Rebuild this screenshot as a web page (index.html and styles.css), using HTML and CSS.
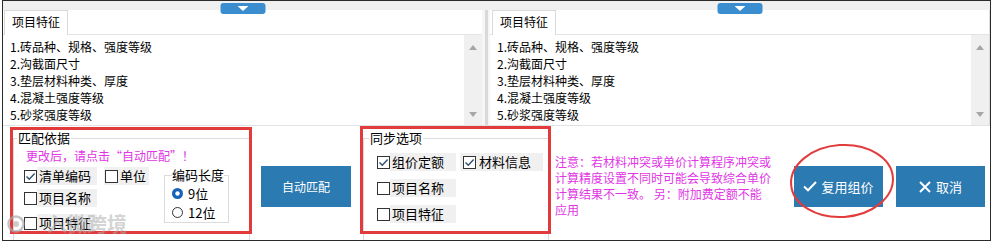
FILE: index.html
```html
<!DOCTYPE html>
<html lang="zh-CN">
<head>
<meta charset="utf-8">
<title>复用组价</title>
<link rel="stylesheet" href="styles.css">
</head>
<body>
<div class="win">
  <div class="strip"></div>
  <div class="panes">
    <section class="pane pane-left">
      <span class="handle"><svg width="11" height="5" viewBox="0 0 11 5"><path d="M0 0H11L5.5 5Z" fill="#fff"/></svg></span>
      <div class="tabs"><div class="tab">项目特征</div></div>
      <div class="pane-body">
        <div class="lines">
          <div>1.砖品种、规格、强度等级</div>
          <div>2.沟截面尺寸</div>
          <div>3.垫层材料种类、厚度</div>
          <div>4.混凝土强度等级</div>
          <div>5.砂浆强度等级</div>
        </div>
        <div class="vscroll"><span class="arr up"></span><span class="arr down"></span></div>
      </div>
    </section>
    <div class="divider"></div>
    <section class="pane pane-right">
      <span class="handle"><svg width="11" height="5" viewBox="0 0 11 5"><path d="M0 0H11L5.5 5Z" fill="#fff"/></svg></span>
      <div class="tabs"><div class="tab">项目特征</div></div>
      <div class="pane-body">
        <div class="lines">
          <div>1.砖品种、规格、强度等级</div>
          <div>2.沟截面尺寸</div>
          <div>3.垫层材料种类、厚度</div>
          <div>4.混凝土强度等级</div>
          <div>5.砂浆强度等级</div>
        </div>
        <div class="vscroll"><span class="arr up"></span><span class="arr down"></span></div>
      </div>
    </section>
  </div>
  <div class="bottom">
    <fieldset class="grp grp-match">
      <legend>匹配依据</legend>
      <p class="hint">更改后，请点击“自动匹配”！</p>
      <div class="match-body">
        <div class="checks">
          <label class="chk"><span class="box on"><svg width="11" height="11" viewBox="0 0 11 11"><path d="M1.5 5.5L4.3 8.3L9.6 2.6" fill="none" stroke="#2f4f6f" stroke-width="1.4"/></svg></span><span class="lbl">清单编码</span></label>
          <label class="chk full"><span class="box"></span><span class="lbl">单位</span></label>
          <label class="chk"><span class="box"></span><span class="lbl">项目名称</span></label>
          <span></span>
          <label class="chk row3"><span class="box"></span><span class="lbl">项目特征</span></label>
        </div>
        <fieldset class="grp grp-len">
          <legend>编码长度</legend>
          <label class="radio first"><svg width="11" height="11" viewBox="0 0 11 11"><circle cx="5.5" cy="5.5" r="5.5" fill="#1763b8"/><circle cx="5.5" cy="5.5" r="2.2" fill="#fff"/></svg><span>9位</span></label>
          <label class="radio"><svg width="11" height="11" viewBox="0 0 11 11"><circle cx="5.5" cy="5.5" r="5" fill="#fff" stroke="#333" stroke-width="1"/></svg><span>12位</span></label>
        </fieldset>
      </div>
    </fieldset>
    <button class="btn btn-auto" type="button">自动匹配</button>
    <fieldset class="grp grp-sync">
      <legend>同步选项</legend>
      <div class="sync-body">
        <label class="chk"><span class="box on"><svg width="11" height="11" viewBox="0 0 11 11"><path d="M1.5 5.5L4.3 8.3L9.6 2.6" fill="none" stroke="#2f4f6f" stroke-width="1.4"/></svg></span><span class="lbl">组价定额</span></label>
        <label class="chk full"><span class="box on"><svg width="11" height="11" viewBox="0 0 11 11"><path d="M1.5 5.5L4.3 8.3L9.6 2.6" fill="none" stroke="#2f4f6f" stroke-width="1.4"/></svg></span><span class="lbl">材料信息</span></label>
        <label class="chk"><span class="box"></span><span class="lbl">项目名称</span></label>
        <span></span>
        <label class="chk"><span class="box"></span><span class="lbl">项目特征</span></label>
      </div>
    </fieldset>
    <p class="note">注意：若材料冲突或单价计算程序冲突或<br>计算精度设置不同时可能会导致综合单价<br>计算结果不一致。 另：附加费定额不能<br>应用</p>
    <button class="btn btn-reuse" type="button"><svg width="14" height="11" viewBox="0 0 14 11"><path d="M1 5.5L5 9.3L13 1" fill="none" stroke="#fff" stroke-width="2"/></svg><span>复用组价</span></button>
    <button class="btn btn-cancel" type="button"><svg width="12" height="12" viewBox="0 0 12 12"><path d="M1 1L11 11M11 1L1 11" fill="none" stroke="#fff" stroke-width="2"/></svg><span>取消</span></button>

    <span class="mark mark-match"></span>
    <span class="mark mark-sync"></span>
    <svg class="mark-ellipse" width="108" height="78" viewBox="0 0 108 78"><ellipse cx="54" cy="39" rx="51" ry="36" transform="rotate(-4 54 39)" fill="none" stroke="#e23b3b" stroke-width="2"/></svg>
    <div class="watermark"><svg width="18" height="18" viewBox="0 0 18 18"><circle cx="9" cy="9" r="7.5" fill="none" stroke="rgba(170,170,170,0.7)" stroke-width="2.5"/><circle cx="9" cy="9" r="3" fill="rgba(170,170,170,0.6)"/></svg><span>入微跨境</span></div>
  </div>
</div>
</body>
</html>
```
FILE: styles.css
```css
* { box-sizing: border-box; }

body {
  margin: 0;
  background: #fff;
  font-family: "Noto Sans CJK SC", "Noto Sans", sans-serif;
  color: #000;
}

.win {
  position: relative;
  margin-left: 2px;
  width: 989px;
  height: 241px;
  border: 1px solid #2b2b2b;
  display: flex;
  flex-direction: column;
  background: #fff;
  overflow: hidden;
}

.strip {
  flex: none;
  height: 9px;
  background: #f0f0f0;
}

.panes {
  flex: none;
  display: flex;
  height: 115px;
}

.pane {
  position: relative;
  display: flex;
  flex-direction: column;
}

.pane-left { width: 479px; }

.pane-right {
  flex: 1;
  border-right: 1px solid #dcdcdc;
}

.divider {
  width: 8px;
  background: linear-gradient(to right, #f6f6f6 0 3px, #d9d9d9 3px 6px, #f6f6f6 6px);
}

.handle {
  position: absolute;
  top: -7px;
  left: 50%;
  transform: translateX(-50%);
  width: 45px;
  height: 11px;
  border-radius: 3px;
  background: #3a8dcf;
  display: flex;
  align-items: center;
  justify-content: center;
  z-index: 2;
}

.tabs {
  height: 25px;
  border-bottom: 1px solid #e3e3e3;
  display: flex;
  align-items: flex-end;
  padding-left: 1px;
  background: #fff;
}

.pane-right .tabs { padding-left: 2px; }

.tab {
  width: 64px;
  height: 25px;
  margin-bottom: -1px;
  border: 1px solid #dadada;
  border-bottom: none;
  background: #fff;
  font-size: 12px;
  line-height: 22px;
  padding-left: 7px;
}

.pane-body {
  display: flex;
  height: 90px;
}

.lines {
  flex: 1;
  padding: 3px 0 0 7px;
  font-size: 12px;
  line-height: 17px;
}

.vscroll {
  width: 18px;
  background: #f0f0f0;
  display: flex;
  flex-direction: column;
  justify-content: space-between;
  align-items: center;
  padding: 10px 0 8px;
}

.arr {
  width: 0;
  height: 0;
  border-left: 4px solid transparent;
  border-right: 4px solid transparent;
}
.arr.up { border-bottom: 5px solid #a6a6a6; }
.arr.down { border-top: 5px solid #a6a6a6; }

/* bottom area */
.bottom {
  flex: 1;
  position: relative;
  border-top: 1px solid #e3e3e3;
  display: flex;
  align-items: flex-start;
  padding-left: 10px;
  overflow: hidden;
}

.grp {
  flex: none;
  margin: 4px 0 0;
  padding: 0;
  border: 1px solid #dcdcdc;
  min-width: 0;
}

.grp legend {
  font-size: 13px;
  line-height: 16px;
  padding: 0 1px;
  margin-left: 3px;
}

.grp-match {
  width: 237px;
  height: 120px;
}

.hint {
  margin: 2px 0 0 12px;
  font-size: 12px;
  line-height: 16px;
  color: #e135e6;
}

.match-body {
  display: flex;
  margin: 3px 0 0 10px;
}

.checks {
  display: grid;
  grid-template-columns: 80px auto;
  row-gap: 4px;
  width: 140px;
  align-items: start;
  justify-items: start;
}

.chk {
  display: flex;
  align-items: center;
  height: 18px;
  font-size: 13px;
}

.box {
  flex: none;
  width: 13px;
  height: 13px;
  border: 1px solid #333;
  background: #fff;
  display: flex;
  align-items: center;
  justify-content: center;
}

.lbl {
  height: 18px;
  line-height: 18px;
  background: #f0f0f0;
  padding: 0 6px 0 2px;
}

.chk.full {
  background: #f0f0f0;
  padding: 0 3px 0 1px;
}
.chk.full .lbl {
  background: none;
  padding: 0 0 0 2px;
}

.chk.row3 { margin-top: 3px; }

.grp-len {
  margin: 0;
  width: 65px;
  height: 56px;
  padding: 0 0 0 7px;
}
.grp-len legend {
  margin-left: 0;
  padding: 0;
}

.radio {
  display: flex;
  align-items: center;
  gap: 5px;
  height: 18px;
  font-size: 13px;
  margin-top: 1px;
}
.radio.first { margin-top: 1px; }

.btn {
  flex: none;
  margin-top: 40px;
  height: 41px;
  width: 89px;
  border: none;
  padding: 0;
  background: #2b7ab1;
  color: #fff;
  font-family: inherit;
  font-size: 13px;
  display: flex;
  align-items: center;
  justify-content: center;
  gap: 4px;
}

.btn-auto {
  width: 90px;
  margin-left: 11px;
  font-size: 12px;
}

.grp-sync {
  width: 186px;
  height: 120px;
  margin-left: 12px;
}
.grp-sync legend { margin-left: 5px; }

.sync-body {
  display: grid;
  grid-template-columns: 83px auto;
  row-gap: 8px;
  margin: 7px 0 0 13px;
  justify-items: start;
}
.grp-sync .lbl { padding-right: 12px; }
.grp-sync .chk.full { padding: 0 0 0 3px; }
.grp-sync .chk.full .lbl { padding: 0 12px 0 3px; }

.note {
  flex: none;
  margin: 28px 0 0 6px;
  width: 220px;
  font-size: 12px;
  line-height: 16px;
  color: #e135e6;
}

.btn-reuse { margin-left: 19px; }
.btn-cancel { margin-left: 13px; gap: 5px; }

/* annotations drawn on top */
.mark {
  position: absolute;
  border: 3px solid #e23b3b;
  pointer-events: none;
}
.mark-match {
  left: 7px;
  top: 1px;
  width: 242px;
  height: 107px;
}
.mark-sync {
  left: 357px;
  top: 0;
  width: 191px;
  height: 108px;
}
.mark-ellipse {
  position: absolute;
  left: 785px;
  top: 16px;
}

.watermark {
  position: absolute;
  left: 4px;
  top: 87px;
  display: flex;
  align-items: center;
  gap: 22px;
  font-size: 20px;
  font-weight: bold;
  line-height: 22px;
  color: rgba(175, 175, 175, 0.55);
  pointer-events: none;
}
```
